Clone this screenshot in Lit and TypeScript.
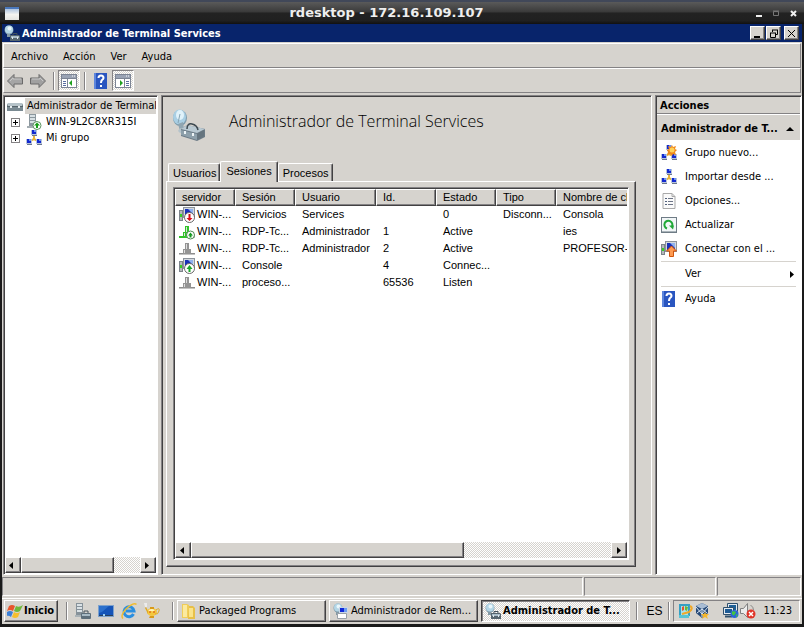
import { LitElement, html, svg, css, nothing } from "lit";
import type { TemplateResult } from "lit";
import { customElement, state } from "lit/decorators.js";
import { classMap } from "lit/directives/class-map.js";

const icon = (body: unknown, size = 16, cls = "") =>
  html`<svg class="icon ${cls}" width=${size} height=${size} viewBox="0 0 ${size} ${size}" aria-hidden="true">${body}</svg>`;

/* A small blue-screened monitor with a stand. */
const monitor = (x: number, y: number) => svg`
  <rect x=${x} y=${y} width="6" height="5" fill="#b8c4d8"/>
  <rect x=${x + 1} y=${y} width="4" height="4" fill="#1228d0"/>
  <rect x=${x + 3} y=${y} width="2" height="2" fill="#6d95f0"/>
  <rect x=${x + 1} y=${y + 5} width="5" height="1" fill="#6c7890"/>`;

const dish = svg`
  <circle cx="5" cy="5" r="4.500" fill="#7f9cac"/>
  <circle cx="5" cy="4.500" r="4" fill="#b4d6e6"/><circle cx="5.500" cy="3.500" r="2" fill="#eaf7fc"/>
  <path d="M3 9h3l1 3H3z" fill="#8499a4"/>`;

const greenUp = svg`
  <circle cx="11" cy="11.500" r="4" fill="#fff" stroke="#5c9460"/>
  <path d="M11 8.500l3 3h-2v2.500h-2v-2.500H8z" fill="#18a018"/>`;

const groupArt = svg`
  <path d="M8 6v4M4 11l4-2 4 2" fill="none" stroke="#e8b53c" stroke-width="2"/>
  ${monitor(5, 0)}${monitor(0, 9)}${monitor(10, 9)}`;

const pcArt = svg`
  <rect x="0" y="3" width="4" height="11" fill="#7d848b"/><rect x="1" y="4" width="2" height="9" fill="#b4b8bc"/>
  <rect x="1" y="7" width="2" height="3" fill="#35d022"/>
  <rect x="4" y="0" width="12" height="11" fill="#8d939b"/><rect x="5" y="1" width="10" height="9" fill="#d3d8de"/>
  <rect x="6" y="2" width="8" height="7" fill="#1830b8"/><path d="M9 2h5v5z" fill="#8fb1ee"/>`;

const plugArt = (fill: string) => svg`
  <path d="M0 12h16v1H0z" fill="#8d8d8d"/><path d="M0 13h16v1H0z" fill="#c4c4c4"/>
  <path d="M6 2h4v6h2v5H4V8h2z" fill=${fill}/><path d="M7 3h1v5H7zM5 9h1v3H5z" fill="#dedede"/>`;

const icons: Record<string, TemplateResult> = {
  manager: icon(svg`${dish}
    <path d="M6 10h9l1 1v5H6z" fill="#55656f"/><rect x="7" y="11" width="8" height="2" fill="#a8bcc8"/>
    <path d="M9 10V8.500h4V10" fill="none" stroke="#40505c"/><path d="M8 12h1v2H8zM13 12h1v2h-1z" fill="#e2eaee"/>`),
  managerBig: icon(svg`
    <ellipse cx="8" cy="10" rx="7" ry="8" fill="#7f9dae"/>
    <ellipse cx="7.500" cy="9" rx="6.500" ry="7.500" fill="#a9cfe4"/>
    <ellipse cx="8" cy="7" rx="4" ry="5" fill="#e0f2fa"/><path d="M8 6l-2 9" stroke="#86a4b4"/>
    <path d="M6 16l5-2 1 7-4 2z" fill="#8fa5b1"/><path d="M6 23q2-4 6-3l4 3-8 2z" fill="#b4c3cb"/>
    <path d="M9 21l6-4 18 4v8l-8 4-16-5z" fill="#6c7b86"/>
    <path d="M9 21l6-4 18 4-8 4z" fill="#b9c9d2"/><path d="M9 22l16 4v6L9 27z" fill="#8ea0ab"/>
    <path d="M25 26l7-4v6l-7 4z" fill="#66757f"/>
    <path d="M15 21q0-6 5-5 5 1 6 6" fill="none" stroke="#3c4850" stroke-width="1.500"/>
    <path d="M12 23h2v3h-2zM20 25h2v3h-2z" fill="#eef4f6"/>`, 34),
  toolbox: icon(svg`
    <path d="M1 5h14l1 2v6H0V7z" fill="#7a8a92"/><path d="M1 5h14v3H1z" fill="#b6c3c9"/>
    <path d="M0 8h16v1H0z" fill="#55636a"/><path d="M3 8h2v2H3zM11 8h2v2h-2z" fill="#e8eef0"/>`),
  server: icon(svg`
    <path d="M3 0h7v13H3z" fill="#8b979e"/><path d="M4 1h5v2H4zM4 4h5v2H4zM4 7h5v2H4z" fill="#d8e0e4"/>
    <path d="M1 12h11v2H1z" fill="#a4adb2"/>${greenUp}`),
  group: icon(groupArt),
  newGroup: icon(svg`${groupArt}
    <path d="M11 0l1 2 3-1-1 3 2 1-2 2 1 3-3-1-1 2-2-2-3 1 1-3-1-2 2-1-1-3 3 1z" fill="#f08a1c"/>
    <circle cx="11" cy="5" r="2.500" fill="#ffd25a"/>`),
  options: icon(svg`
    <path d="M2 0.500h9l3 3v12H2z" fill="#fafafa" stroke="#a9a9a9"/><path d="M11 0.500v3h3" fill="none" stroke="#a9a9a9"/>
    <path d="M4 5h2v1H4zM4 8h2v1H4zM4 11h2v1H4z" fill="#50607c"/><path d="M7 5.500h5M7 8.500h5M7 11.500h5" stroke="#6c7486"/>`),
  refresh: icon(svg`
    <rect x="0.500" y="0.500" width="15" height="15" fill="#f2f6f8" stroke="#6f7c86"/>
    <path d="M1 14.500h14" stroke="#aab4ba"/>
    <path d="M6 11.500a4 4 0 1 1 5-2" fill="none" stroke="#20a838" stroke-width="2"/><path d="M8 8.500h5l-1 4z" fill="#20a838"/>`),
  connect: icon(svg`${pcArt}<path d="M10.500 5l5 5h-3v5.500h-4V10h-3z" fill="#ff9a50" stroke="#d0540c"/>`),
  help: icon(svg`
    <rect x="1" y="0" width="13" height="16" fill="#2a56c0"/><rect x="1" y="0" width="2" height="16" fill="#5e86dc"/>
    <path d="M5.500 5q0-2.500 2.500-2.500T10.500 5q0 1-1.500 2-1 1-1 3" fill="none" stroke="#fff" stroke-width="2"/><rect x="7" y="12" width="2" height="2" fill="#fff"/>`),
  pcDown: icon(svg`${pcArt}<circle cx="10.500" cy="10.500" r="5" fill="#fff" stroke="#666"/>
    <path d="M9.500 7h2v4h2l-3 3-3-3h2z" fill="#d80c18"/>`),
  pcUp: icon(svg`${pcArt}<circle cx="10.500" cy="10.500" r="5" fill="#fff" stroke="#666"/>
    <path d="M9.500 14h2v-3h2l-3-4-3 4h2z" fill="#1aa82a"/>`),
  plugUp: icon(svg`${plugArt("#32c42a")}<path d="M0 12h8v2H0z" fill="#32c42a"/>
    <circle cx="11.500" cy="11" r="4" fill="#fff" stroke="#4d8850"/><path d="M10.500 13.500h2v-2H14l-2.500-3L9 11.500h1.500z" fill="#159a22"/>`),
  plug: icon(plugArt("#949494")),
  back: icon(svg`<path d="M0.500 8L7 1.500V5h8.500v6H7v3.500z" fill="#a5a5a5" stroke="#6a6a6a"/><path d="M3 8l3-3v1h8" fill="none" stroke="#c8c8c8"/>`),
  forward: icon(svg`<path d="M15.500 8L9 1.500V5H.500v6H9v3.500z" fill="#a0a0a0" stroke="#6a6a6a"/><path d="M2 6h8V5l3 3" fill="none" stroke="#c8c8c8"/>`),
  showTree: icon(svg`
    <rect x="0.500" y="1.500" width="15" height="13" fill="#fff" stroke="#7c8494"/><path d="M1 2h14v3H1z" fill="#9aa3b4"/>
    <path d="M11 3h1M13 3h1" stroke="#fff"/><path d="M1 5.500h14M6.500 6v9" stroke="#7c8494"/>
    <path d="M2 8.500h3M2 10.500h3M2 12.500h3" stroke="#5a6da0"/><path d="M11 7v6l-3-3z" fill="#1fa01f"/>`),
  showActions: icon(svg`
    <rect x="0.500" y="1.500" width="15" height="13" fill="#fff" stroke="#7c8494"/><path d="M1 2h14v3H1z" fill="#9aa3b4"/>
    <path d="M11 3h1M13 3h1" stroke="#fff"/><path d="M1 5.500h14M9.500 6v9" stroke="#7c8494"/>
    <path d="M11 8.500h3M11 10.500h3M11 12.500h3" stroke="#5a6da0"/><path d="M5 7v6l3-3z" fill="#1fa01f"/>`),
  flag: icon(svg`
    <path d="M2 3q3-2 6 0L6 8Q3 6 0 8z" fill="#e8552c"/><path d="M9 3q3 2 7-1l-3 6q-3 2-6 0z" fill="#6fb83a"/>
    <path d="M0 9q3-2 6 0l-2 5q-2-2-5-1z" fill="#3a80d8"/><path d="M7 9q3 2 6 0l-2 5q-3 2-6 0z" fill="#f6bf2c"/>`),
  serverBox: icon(svg`
    <path d="M1 0h7v12H1z" fill="#87929a"/><path d="M2 1h5v2H2zM2 4h5v2H2zM2 7h5v2H2z" fill="#dbe2e6"/><path d="M0 12h8v2H0z" fill="#a9b2b7"/>
    <rect x="6" y="10" width="10" height="6" rx="1" fill="#5e6f7b"/><path d="M7 11h8v2H7z" fill="#a8bac5"/><path d="M9 10V8h4v2" fill="none" stroke="#46545e"/>`),
  desktop: icon(svg`
    <rect x="0" y="2" width="16" height="12" fill="#7da1cc"/><rect x="1" y="3" width="14" height="9" fill="#1554b8"/>
    <path d="M1 3h10L4 9 1 10z" fill="#2c70cc"/><path d="M1 12h14v1H1z" fill="#28415e"/><path d="M5 11h2v2H5z" fill="#9fd0f0"/>`),
  explorer: icon(svg`
    <path d="M12.500 11a5 5 0 1 1 .5-3H5" fill="none" stroke="#2b8fe0" stroke-width="3"/>
    <path d="M2 15.500Q-1 13 5 6 13-1 15.500 1.500" fill="none" stroke="#f0bc32" stroke-width="1.500"/>`),
  lamp: icon(svg`
    <ellipse cx="8" cy="9" rx="5" ry="4" fill="#f4c63c"/><path d="M12 7q4-3 3 1t-4 3" fill="none" stroke="#e0a820"/><path d="M4 8L2 4 1 5l3 6z" fill="#e0a820"/>
    <path d="M6 4h4v2H6zM6 13h4v2H5z" fill="#d99a18"/><path d="M0 0h3v4H1z" fill="#ececec"/><path d="M5 8q3-2 5 0" fill="none" stroke="#fff4b8" stroke-width="2"/>
    <circle cx="6" cy="9" r="1" fill="#e07018"/><circle cx="10" cy="9" r="1" fill="#e07018"/>`),
  folders: icon(svg`
    <path d="M1 1h5l2 1v13H1z" fill="#f0cd58"/><path d="M2 2h4v12H2z" fill="#fbeaa0"/>
    <path d="M8 3h4l2 2v11H7z" fill="#e8c048"/><path d="M8 5h4v9H8z" fill="#fbe48a"/>`),
  remote: icon(svg`${dish}
    <rect x="6" y="4" width="9" height="6" fill="#cbd6e6"/><rect x="7" y="5" width="4" height="4" fill="#1028d8"/><rect x="11" y="5" width="3" height="4" fill="#6c9cf0"/>
    <path d="M4.500 10.500h9v5h-9z" fill="#fff" stroke="#98a0a8"/>`),
  updates: icon(svg`
    <path d="M2 1h11v12H2z" fill="#35a0c4"/><path d="M4 3h7v9H4z" fill="#a8e2ec"/>
    <path d="M5 4l2-1v4L5 8z" fill="#e3542c"/><path d="M8 3l3 1-1 4-2-1z" fill="#6cb838"/>
    <path d="M13 3q4 2-1 6l-7 2" fill="none" stroke="#f0a828" stroke-width="2"/><path d="M2 12h10v3H2z" fill="#58c4d4"/>`),
  cube: icon(svg`
    <path d="M8 0l6 3v7l-6 5-6-5V3z" fill="#274a78"/><path d="M8 0l6 3-6 3-6-3z" fill="#a8bcd4"/>
    <path d="M8 6v8M2 4l6 7 6-7M3 10l5-4 5 4" fill="none" stroke="#d8e4f0"/><path d="M11 9l1 2h3l-2 2 1 3-3-2-3 2 1-3-2-2h3z" fill="#f4b62c"/>`),
  network: icon(svg`
    <path d="M4.500 0.500h10v8h-10z" fill="#e4eaf0" stroke="#30506c"/><path d="M6 2h7v5H6z" fill="#1d6098"/>
    <path d="M0.500 4.500h10v7h-10z" fill="#e4eaf0" stroke="#30506c"/><path d="M2 6h7v4H2z" fill="#1d5a94"/><path d="M2 13.500h7" stroke="#30506c" stroke-width="2"/>
    <circle cx="11.500" cy="11" r="4" fill="#2a64d8"/><path d="M9 8.500q3-1 4 1l-2 3q-3-1-2-4zM13 11.500h2l-2 3z" fill="#42c440"/>`),
  sound: icon(svg`
    <path d="M0.500 5.500h3l4-5v14l-4-4h-3z" fill="#ececec" stroke="#808080"/><path d="M10.500 2q3 2 3 5" fill="none" stroke="#888"/>
    <circle cx="11" cy="11" r="4.500" fill="#e03428"/><path d="M9 9l4 4m0-4l-4 4" stroke="#fff" stroke-width="1.500"/>`),
};

const arrow = (dir: "left" | "right" | "up") => {
  const d = { left: "M5 0v7L1 3.500z", right: "M2 0v7l4-3.500z", up: "M0 6h8L4 2z" }[dir];
  return html`<svg class="icon" width="8" height="7" viewBox="0 0 8 7" aria-hidden="true"><path d=${d}/></svg>`;
};

interface Session { icon: string; cells: string[]; }

const columns = ["servidor", "Sesión", "Usuario", "Id.", "Estado", "Tipo", "Nombre de cl"];

const sessions: Session[] = [
  { icon: "pcDown", cells: ["WIN-...", "Servicios", "Services", "", "0", "Disconn...", "Consola"] },
  { icon: "plugUp", cells: ["WIN-...", "RDP-Tc...", "Administrador", "1", "Active", "", "ies"] },
  { icon: "plug", cells: ["WIN-...", "RDP-Tc...", "Administrador", "2", "Active", "", "PROFESOR-"] },
  { icon: "pcUp", cells: ["WIN-...", "Console", "", "4", "Connec...", "", ""] },
  { icon: "plug", cells: ["WIN-...", "proceso...", "", "65536", "Listen", "", ""] },
];

@customElement("app-root")
export class AppRoot extends LitElement {
  @state() private tab = "Sesiones";

  static styles = css`
    :host {
      --face: #d6d3ce;
      --shade: #848284;
      --dark: #424142;
      --dither: repeating-conic-gradient(#fff 0 25%, var(--face) 0 50%) 0 0 / 2px 2px;
      display: flex;
      flex-direction: column;
      box-sizing: border-box;
      height: 100vh;
      overflow: hidden;
      border-top: 2px solid #414859;
      background: #1a1a1a;
      color: #000;
      font: 11px/16px "DejaVu Sans Condensed", "DejaVu Sans", sans-serif;
      font-stretch: condensed;
    }
    * { box-sizing: border-box; }
    button { margin: 0; padding: 0; border: 0; background: none; color: inherit; font: inherit; white-space: nowrap; }
    ul { margin: 0; padding: 0; list-style: none; }
    h1, h2 { margin: 0; font: inherit; }
    .icon { display: block; flex: none; }
    .grow { flex: 1; min-width: 0; }

    .frame { display: flex; align-items: center; flex: none; height: 22px; padding: 0 5px 0 5px; color: #eee;
      background: linear-gradient(#5a5a5a, #3a3a3a 45%, #222 50%, #202020 85%, #111); }
    .frame h1 { flex: 1; text-align: center; font: bold 13px/20px "DejaVu Sans", sans-serif; }
    .logo { width: 14px; height: 13px; border-top: 2px solid #4a78bc; background: linear-gradient(#aec4e0, #f4f4f0 50%, #e4e4e0); }
    .framebuttons { display: flex; gap: 6px; }
    .framebuttons button { width: 11px; height: 16px; display: grid; place-items: center; }

    .window { flex: 1; min-height: 0; display: flex; flex-direction: column; margin: 0 2px 3px; background: var(--face); }
    .caption { display: flex; align-items: center; gap: 1px; flex: none; height: 18px; padding: 0 3px 0 2px; background: #08246b; color: #fff;
      font-weight: bold; }
    .caption h2 { flex: 1; padding: 1px 0 0 1px; }
    .caption button { width: 15px; height: 14px; display: grid; place-items: center; }
    .caption button:last-child { margin-left: 2px; }
    .raised { background: var(--face); color: #000; border: 1px solid; border-color: #fff var(--dark) var(--dark) #fff; box-shadow: inset -1px -1px var(--shade); }

    .bar { display: flex; align-items: center; flex: none; height: 25px; margin: 0 1px; border: 1px solid;
      border-color: #fff var(--shade) var(--shade) #fff; }
    .menu { margin-top: 1px; padding-top: 2px; }
    .menu button { padding: 0 8px 0 7px; }
    .tools { padding-left: 3px; gap: 7px; }
    .divider { width: 2px; height: 18px; border-left: 1px solid var(--shade); background: #fff; }
    .pressed { width: 22px; height: 21px; display: grid; place-items: center; background: var(--dither); border: 1px solid;
      border-color: var(--shade) #fff #fff var(--shade); }
    .tools .pressed { margin: 0 -3px 0 -4px; }

    .panes { flex: 1; min-height: 0; display: grid; grid-template-columns: 155px minmax(0, 1fr) 147px; gap: 3px; margin: 2px 0 0 1px; }
    .pane { display: flex; flex-direction: column; min-width: 0; min-height: 0; border: 1px solid; overflow: hidden;
      border-color: var(--shade) #fff #fff var(--shade); box-shadow: inset 1px 1px var(--dark); padding: 1px; }
    .white { background: #fff; }

    .tree ul { padding-top: 1px; }
    .tree li { display: flex; align-items: center; height: 16px; white-space: nowrap; }
    .tree .icon { margin: 0 4px 0 2px; }
    .root span { background: var(--face); padding: 0 2px; margin-left: -2px; flex: 1; overflow: hidden; }
    .expand { flex: none; width: 9px; height: 9px; margin: 0 4px 0 6px; border: 1px solid var(--shade);
      background: linear-gradient(#000, #000) 1px 3px / 5px 1px no-repeat, linear-gradient(#000, #000) 3px 1px / 1px 5px no-repeat; }

    .scroll { display: flex; flex: none; height: 16px; background: var(--dither); }
    .scroll button { width: 16px; display: grid; place-items: center; }
    .track { flex: 1; display: flex; }
    .thumb { width: 65%; height: 16px; }
    .tree .thumb { width: 78%; }

    .middle { padding: 1px 15px 7px 5px; }
    .heading { display: flex; align-items: flex-start; gap: 23px; height: 64px; padding: 11px 0 0 5px; flex: none; }
    .heading h2 { font: 300 16px/26px "Open Sans", "Noto Sans", sans-serif; }
    .ms { font-family: "Liberation Sans", Arial, sans-serif; }
    .tabs { display: flex; align-items: flex-end; flex: none; height: 20px; padding-left: 1px; }
    .tab { height: 18px; padding: 1px 3px 0 4px; border: 1px solid; border-color: #fff var(--dark) transparent #fff; border-bottom: 0;
      border-radius: 2px 2px 0 0; box-shadow: inset -1px 0 var(--shade); background: var(--face); }
    .tab.current { height: 21px; margin-bottom: -1px; padding: 0 5px 2px 5px; z-index: 1; }
    .sheet { flex: 1; min-height: 0; display: flex; padding: 5px 6px 6px 6px; margin-left: -1px; border: 1px solid;
      border-color: #fff var(--dark) var(--dark) #fff; box-shadow: inset -1px -1px var(--shade); }
    .list { flex: 1; min-width: 0; display: flex; flex-direction: column; border: 1px solid; background: #fff;
      border-color: var(--shade) #fff #fff var(--shade); box-shadow: inset 1px 1px var(--dark); padding: 1px; }
    .rows { flex: 1; overflow: hidden; }
    table { width: 530px; table-layout: fixed; border-collapse: separate; border-spacing: 0; line-height: 15px; }
    th { height: 17px; padding: 0 0 0 6px; font-weight: normal; text-align: left; white-space: nowrap; overflow: hidden; }
    td { height: 17px; padding: 0 0 0 7px; white-space: nowrap; overflow: hidden; }
    td:first-child { padding-left: 4px; }
    .c60 { width: 60px; }
    .c80 { width: 81px; }
    .cell { display: flex; align-items: center; gap: 2px; height: 17px; }

    .actions h2 { height: 17px; padding: 1px 0 0 3px; border-bottom: 1px solid var(--shade); background: var(--face); font-weight: bold; flex: none; line-height: 15px; }
    .section { display: flex; align-items: center; justify-content: space-between; height: 26px; flex: none; padding: 2px 6px 0 4px;
      border-top: 1px solid #fff; background: var(--face); font-weight: bold; }
    .actions ul { padding-top: 1px; }
    .actions li { padding: 0 4px; }
    .action { display: flex; align-items: center; width: 100%; height: 24px; gap: 8px; text-align: left; }
    .action .label { flex: 1; }
    .indent { padding-left: 24px; }
    .line { border-top: 1px solid var(--face); margin: 0 4px; }

    .status { display: grid; grid-template-columns: minmax(0, 1fr) 132px 84px; gap: 1px; flex: none; height: 19px; margin: 2px 1px 2px 0; }
    .status div { border: 1px solid; border-color: var(--shade) #fff #fff var(--shade); }

    .taskbar { display: flex; align-items: center; gap: 3px; flex: none; height: 26px; padding: 1px 2px 2px 2px; border-top: 1px solid #fff; }
    .start { display: flex; align-items: center; gap: 1px; width: 54px; height: 22px; padding-left: 2px; font-weight: bold; }
    .quick { display: flex; gap: 7px; padding: 0 9px 0 4px; }
    .gap { padding-left: 2px; }
    .task { display: flex; align-items: center; gap: 2px; flex: 0 1 149px; min-width: 0; height: 22px; padding: 0 3px; overflow: hidden; }
    .task.active { background: var(--dither); font-weight: bold; border: 1px solid; border-color: var(--dark) #fff #fff var(--dark);
      box-shadow: inset 1px 1px var(--shade); }
    .lang { font: 12px/16px "Liberation Sans", Arial, sans-serif; padding: 0 3px 0 5px; }
    .tray { display: flex; align-items: center; gap: 1px; height: 22px; padding: 0 7px 0 3px; border: 1px solid;
      border-color: var(--shade) #fff #fff var(--shade); }
    .tray .icon:nth-child(3) { margin-left: 12px; }
    .tray time { padding-left: 6px; }
  `;

  private scrollbar(label: string) {
    return html`<div class="scroll" role="group" aria-label=${label}>
      <button class="raised" aria-label="Izquierda">${arrow("left")}</button>
      <div class="track"><div class="thumb raised"></div></div>
      <button class="raised" aria-label="Derecha">${arrow("right")}</button>
    </div>`;
  }

  private action(name: string, label: string) {
    return html`<li><button class="action">${icons[name]}<span class="label">${label}</span></button></li>`;
  }

  private glyph(d: string, color: string, width = 2) {
    return html`<svg class="icon" width="9" height="9" viewBox="0 0 9 9" aria-hidden="true"><path d=${d} fill="none" stroke=${color} stroke-width=${width}/></svg>`;
  }

  render() {
    return html`
      <header class="frame">
        <span class="logo"></span>
        <h1>rdesktop - 172.16.109.107</h1>
        <div class="framebuttons">
          <button aria-label="Minimizar ventana">${this.glyph("M1 7h6", "#eee")}</button>
          <button aria-label="Maximizar ventana">${this.glyph("M1.500 2.500h5v4h-5zM1 2h6", "#777", 1)}</button>
          <button aria-label="Cerrar ventana">${this.glyph("M2 2l5 5M7 2l-5 5", "#eee")}</button>
        </div>
      </header>
      <div class="window">
        <div class="caption">
          ${icons.manager}<h2>Administrador de Terminal Services</h2>
          <button class="raised" aria-label="Minimizar">${this.glyph("M1 8h6", "#000")}</button>
          <button class="raised" aria-label="Restaurar">${this.glyph("M3 1h6M3.500 1v2M8.500 1v4.500H7M1 4h6M1.500 4v4.500h5V4", "#000", 1)}</button>
          <button class="raised" aria-label="Cerrar">${this.glyph("M1 1l7 7M8 1l-7 7", "#000", 1)}</button>
        </div>
        <nav class="bar menu">
          ${["Archivo", "Acción", "Ver", "Ayuda"].map((m) => html`<button>${m}</button>`)}
        </nav>
        <div class="bar tools" role="toolbar">
          <button aria-label="Atrás">${icons.back}</button>
          <button aria-label="Adelante">${icons.forward}</button>
          <span class="divider"></span>
          <button class="pressed" aria-label="Mostrar árbol">${icons.showTree}</button>
          <span class="divider"></span>
          <button aria-label="Ayuda">${icons.help}</button>
          <button class="pressed" aria-label="Mostrar acciones">${icons.showActions}</button>
        </div>

        <main class="panes">
          <section class="pane white tree">
            <ul class="grow">
              <li class="root">${icons.toolbox}<span>Administrador de Terminal Services</span></li>
              <li><button class="expand" aria-label="Expandir"></button>${icons.server}WIN-9L2C8XR315I</li>
              <li><button class="expand" aria-label="Expandir"></button>${icons.group}Mi grupo</li>
            </ul>
            ${this.scrollbar("Desplazar árbol")}
          </section>

          <section class="pane middle">
            <div class="heading">${icons.managerBig}<h2>Administrador de Terminal Services</h2></div>
            <div class="tabs ms" role="tablist">
              ${["Usuarios", "Sesiones", "Procesos"].map((t) => html`
                <button role="tab" aria-selected=${t === this.tab} class=${classMap({ tab: true, current: t === this.tab })}
                  @click=${() => { this.tab = t; }}>${t}</button>`)}
            </div>
            <div class="sheet">
              <div class="list ms">
                <div class="rows">
                  <table>
                    <colgroup><col class="c60"><col class="c60"><col class="c80"><col class="c60"><col class="c60"><col class="c60"><col></colgroup>
                    <thead><tr>${columns.map((c) => html`<th class="raised">${c}</th>`)}</tr></thead>
                    <tbody>
                      ${sessions.map((s) => html`<tr>${s.cells.map((c, i) => html`<td>${i === 0
                        ? html`<div class="cell">${icons[s.icon]}${c}</div>` : c || nothing}</td>`)}</tr>`)}
                    </tbody>
                  </table>
                </div>
                ${this.scrollbar("Desplazar lista")}
              </div>
            </div>
          </section>

          <aside class="pane white actions">
            <h2>Acciones</h2>
            <button class="section">Administrador de T... ${arrow("up")}</button>
            <ul>
              ${this.action("newGroup", "Grupo nuevo...")}
              ${this.action("group", "Importar desde ...")}
              ${this.action("options", "Opciones...")}
              ${this.action("refresh", "Actualizar")}
              ${this.action("connect", "Conectar con el ...")}
            </ul>
            <div class="line"><button class="action indent"><span class="label">Ver</span>${arrow("right")}</button></div>
            <div class="line"><button class="action">${icons.help}<span class="label">Ayuda</span></button></div>
          </aside>
        </main>

        <footer class="status"><div></div><div></div><div></div></footer>

        <div class="taskbar">
          <button class="start raised">${icons.flag}Inicio</button>
          <span class="gap"></span><span class="divider"></span>
          <div class="quick">
            <button aria-label="Administrador del servidor">${icons.serverBox}</button>
            <button aria-label="Mostrar escritorio">${icons.desktop}</button>
            <button aria-label="Internet Explorer">${icons.explorer}</button>
            <button aria-label="Lámpara">${icons.lamp}</button>
          </div>
          <span class="divider"></span>
          <button class="task raised">${icons.folders}Packaged Programs</button>
          <button class="task raised">${icons.remote}Administrador de Rem...</button>
          <button class="task active">${icons.manager}Administrador de T...</button>
          <span class="grow"></span>
          <span class="divider"></span>
          <span class="lang">ES</span>
          <span class="divider"></span>
          <div class="tray">${icons.updates}${icons.cube}${icons.network}${icons.sound}<time>11:23</time></div>
        </div>
      </div>
    `;
  }
}
